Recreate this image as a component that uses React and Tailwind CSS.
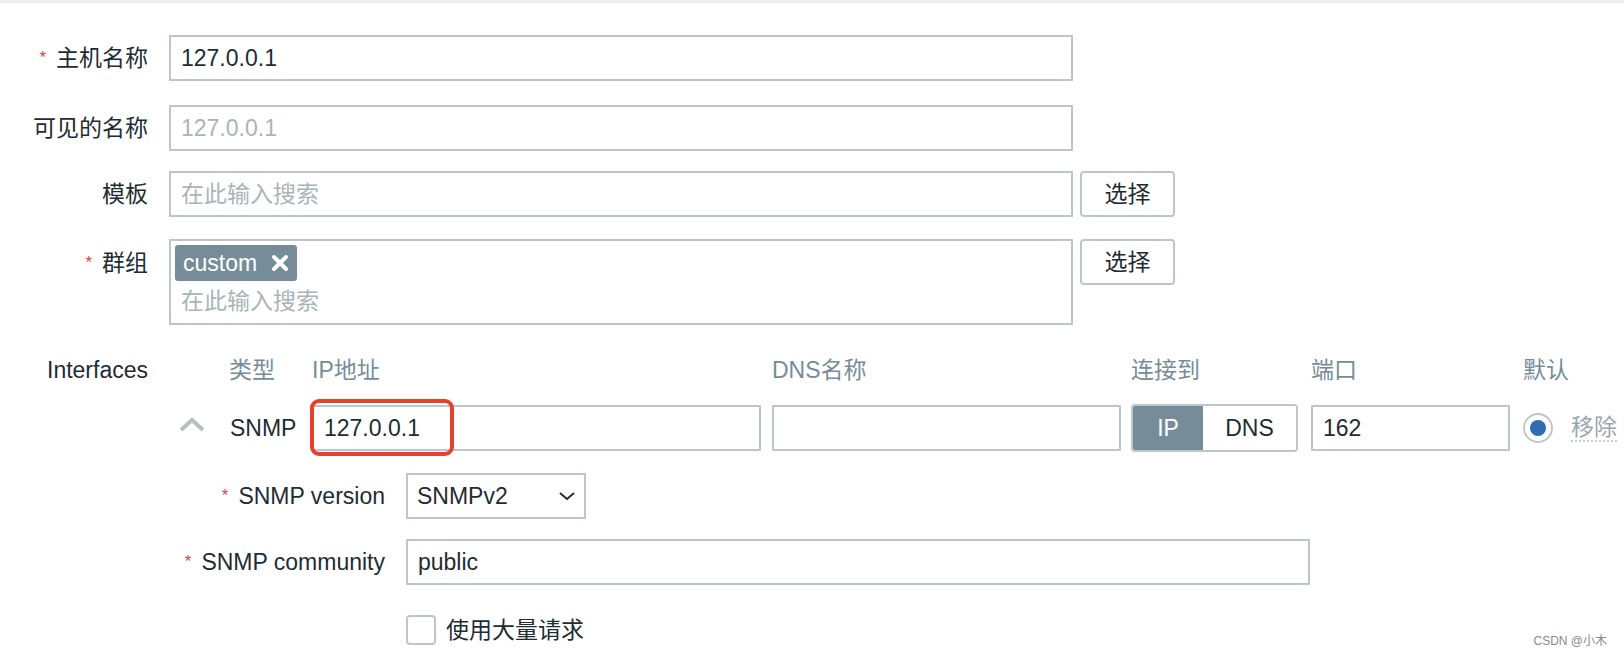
import { useState } from 'react';

const FONT = { fontFamily: '"Liberation Sans", Arial, "Noto Sans CJK SC", sans-serif' };

function Req() {
  return <span className="text-[#d64545] text-[17px] mr-[10px] relative -top-[3px]">*</span>;
}

function Label({ children, required, className = '' }) {
  return (
    <div className={`w-[148px] shrink-0 text-right text-[#1f2c33] leading-[46px] ${className}`}>
      {required && <Req />}
      {children}
    </div>
  );
}

function TextBox({ value, placeholder, width = 'w-[904px]', muted }) {
  return (
    <div className={`${width} h-[46px] border-2 border-[#bcc7cd] bg-white px-[10px] flex items-center`}>
      {value ? (
        <span className={muted ? 'text-[#a9b4ba]' : 'text-[#1f2c33]'}>{value}</span>
      ) : (
        <span className="text-[#a9b4ba]">{placeholder}</span>
      )}
    </div>
  );
}

function PickButton() {
  return (
    <button className="ml-[7px] w-[95px] h-[46px] border-2 border-[#bcc7cd] rounded-[4px] bg-white text-[#1f2c33]">
      选择
    </button>
  );
}

export default function App() {
  const [bulk, setBulk] = useState(false);

  return (
    <div className="w-[1624px] h-[656px] bg-white relative overflow-hidden text-[23px]" style={FONT}>
      <div className="h-[3px] bg-[#eceef0]" />

      <div className="flex flex-col pt-[32px]">
        {/* host name */}
        <div className="flex gap-[21px]">
          <Label required>主机名称</Label>
          <TextBox value="127.0.0.1" />
        </div>

        {/* visible name */}
        <div className="flex gap-[21px] mt-[21px]">
          <Label>可见的名称</Label>
          <TextBox value="127.0.0.1" muted />
        </div>

        {/* templates */}
        <div className="flex gap-[21px] mt-[20px]">
          <Label>模板</Label>
          <TextBox placeholder="在此输入搜索" />
          <div className="-ml-[21px]"><PickButton /></div>
        </div>

        {/* groups */}
        <div className="flex gap-[21px] mt-[22px]">
          <Label required className="pt-[1px]">群组</Label>
          <div className="w-[904px] h-[86px] border-2 border-[#bcc7cd] bg-white px-[4px] pt-[4px]">
            <div className="inline-flex items-center h-[36px] px-[8px] rounded-[3px] bg-[#768d99] text-white">
              <span>custom</span>
              <svg width="18" height="18" viewBox="0 0 18 18" className="ml-[14px]">
                <path d="M3 3 L15 15 M15 3 L3 15" stroke="white" strokeWidth="4" strokeLinecap="round" />
              </svg>
            </div>
            <div className="text-[#a9b4ba] leading-[30px] pl-[6px] mt-[5px]">在此输入搜索</div>
          </div>
          <div className="-ml-[21px]"><PickButton /></div>
        </div>

        {/* interfaces header */}
        <div className="flex gap-[21px] mt-[30px] h-[30px] items-center">
          <div className="w-[148px] shrink-0 text-right text-[#1f2c33]">Interfaces</div>
          <div className="grid grid-cols-[60px_83px_460px_359px_180px_212px_100px] text-[#768d99]">
            <div />
            <div>类型</div>
            <div>IP地址</div>
            <div>DNS名称</div>
            <div>连接到</div>
            <div>端口</div>
            <div>默认</div>
          </div>
        </div>

        {/* snmp interface row */}
        <div className="flex mt-[19px] pl-[169px]">
          <div className="grid grid-cols-[60px_83px_460px_359px_180px_212px_100px] items-center h-[46px]">
            <div className="pl-[9px] flex items-center -mt-[8px]">
              <svg width="28" height="16" viewBox="0 0 28 16">
                <path d="M3 14 L14 4 L25 14" fill="none" stroke="#b5c0c6" strokeWidth="4" />
              </svg>
            </div>
            <div className="text-[#1f2c33] pl-[1px]">SNMP</div>
            <div className="relative">
              <TextBox value="127.0.0.1" width="w-[449px]" />
              <div className="absolute -left-[2px] -top-[6px] w-[144px] h-[57px] border-4 border-[#e5412d] rounded-[9px]" />
            </div>
            <div>
              <TextBox value="" width="w-[349px]" />
            </div>
            <div className="flex w-[167px] h-[48px] border-2 border-[#bcc7cd] rounded-[4px] overflow-hidden">
              <div className="w-[70px] bg-[#768d99] text-white flex items-center justify-center">IP</div>
              <div className="flex-1 bg-white text-[#1f2c33] flex items-center justify-center">DNS</div>
            </div>
            <div>
              <TextBox value="162" width="w-[199px]" />
            </div>
            <div className="flex items-center">
              <div className="w-[30px] h-[30px] rounded-full border-2 border-[#bcc7cd] flex items-center justify-center bg-white">
                <div className="w-[16px] h-[16px] rounded-full bg-[#2f6db0]" />
              </div>
              <span className="ml-[18px] text-[#9aa7ae] border-b-2 border-dotted border-[#c5ced3] leading-[26px] whitespace-nowrap">移除</span>
            </div>
          </div>
        </div>

        {/* snmp version */}
        <div className="flex mt-[23px] items-center">
          <div className="w-[385px] shrink-0 text-right text-[#1f2c33]"><Req />SNMP version</div>
          <div className="ml-[21px] w-[180px] h-[46px] border-2 border-[#bcc7cd] bg-white flex items-center justify-between pl-[9px] pr-[8px] text-[#1f2c33]">
            <span>SNMPv2</span>
            <svg width="18" height="12" viewBox="0 0 18 12">
              <path d="M2 3 L9 9 L16 3" fill="none" stroke="#1f2c33" strokeWidth="2" />
            </svg>
          </div>
        </div>

        {/* snmp community */}
        <div className="flex mt-[20px] items-center">
          <div className="w-[385px] shrink-0 text-right text-[#1f2c33]"><Req />SNMP community</div>
          <div className="ml-[21px]">
            <TextBox value="public" />
          </div>
        </div>

        {/* bulk */}
        <div className="flex mt-[22px] items-center h-[46px] pl-[406px]">
          <button
            onClick={() => setBulk(!bulk)}
            className="w-[30px] h-[30px] border-2 border-[#bcc7cd] rounded-[4px] bg-white"
          />
          <span className="ml-[10px] text-[#1f2c33]">使用大量请求</span>
        </div>
      </div>

      <div className="absolute right-[17px] bottom-[6px] text-[12px] text-[#8a8a8a]">CSDN @小木</div>
    </div>
  );
}
